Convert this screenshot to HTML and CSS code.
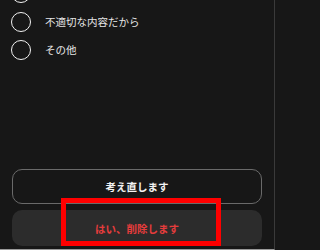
FILE: index.html
```html
<!DOCTYPE html>
<html lang="ja">
<head>
<meta charset="utf-8">
<link rel="stylesheet" href="styles.css">
</head>
<body>
<div class="screen">
  <ul class="options">
    <li class="option"><span class="radio"></span></li>
    <li class="option"><span class="radio"></span><span class="label">不適切な内容だから</span></li>
    <li class="option"><span class="radio"></span><span class="label">その他</span></li>
  </ul>
  <div class="actions">
    <button class="btn btn-outline">考え直します</button>
    <button class="btn btn-danger">はい、削除します</button>
  </div>
  <div class="highlight"></div>
</div>
</body>
</html>
```
FILE: styles.css
```css
html, body {
  margin: 0;
  padding: 0;
  background: #171717;
}
body {
  font-family: "Noto Sans CJK JP", "Noto Sans", sans-serif;
}
.screen {
  position: relative;
  width: 275px;
  height: 250px;
  box-sizing: border-box;
  background: #171717;
  border-right: 1px solid #3a3a3a;
  border-bottom: 1px solid #9a9a9a;
  overflow: hidden;
  display: flex;
  flex-direction: column;
}
.options {
  list-style: none;
  margin: -21px 0 0 0;
  padding: 0;
}
.option {
  height: 28.5px;
  display: flex;
  align-items: center;
  padding-left: 11px;
  gap: 14px;
}
.radio {
  width: 20px;
  height: 20px;
  box-sizing: border-box;
  border: 1.6px solid #f2f2f2;
  border-radius: 50%;
  flex: none;
}
.label {
  color: #e6e6e6;
  font-size: 10.5px;
  line-height: 1;
}
.actions {
  margin-top: auto;
  padding: 0 12px 3px 12px;
  display: flex;
  flex-direction: column;
  gap: 6px;
}
.btn {
  font-family: inherit;
  font-size: 10.5px;
  font-weight: 700;
  border-radius: 10px;
  width: 100%;
  margin: 0;
  padding: 0;
}
.btn-outline {
  height: 35px;
  background: transparent;
  border: 1.5px solid #6a6a6a;
  color: #f2f2f2;
}
.btn-danger {
  height: 36px;
  background: #2c2c2c;
  border: none;
  color: #e53c3c;
}
.highlight {
  position: absolute;
  left: 61px;
  top: 198px;
  width: 160px;
  height: 48px;
  box-sizing: border-box;
  border: 5px solid #ff0000;
}
```
